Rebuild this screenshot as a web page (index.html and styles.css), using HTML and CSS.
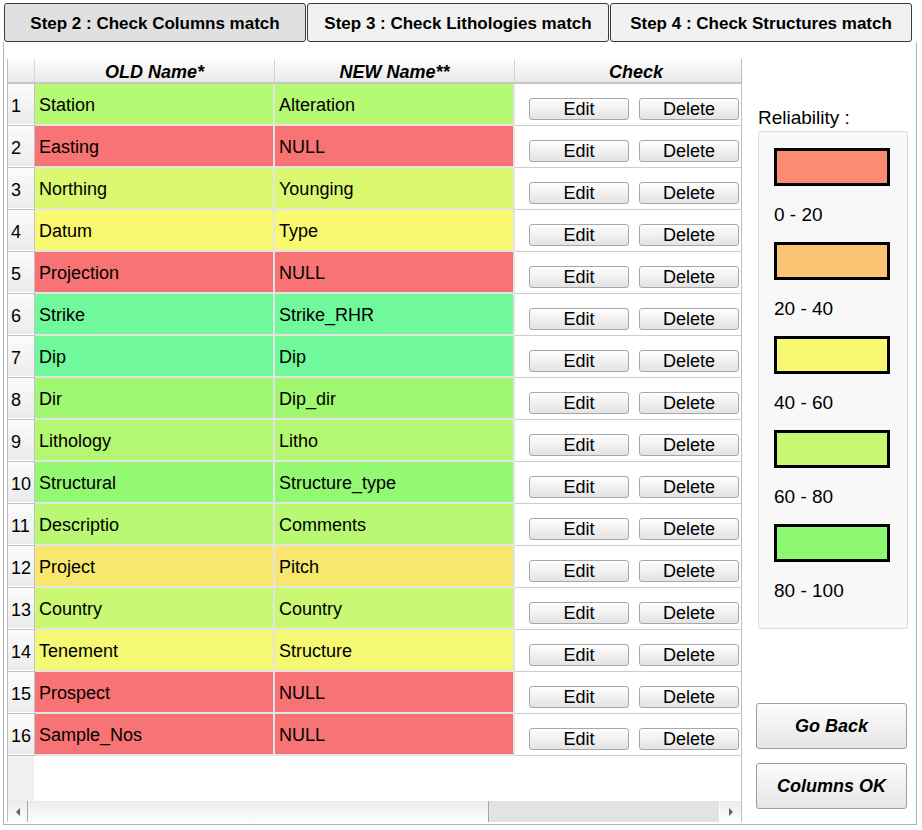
FILE: index.html
```html
<!DOCTYPE html>
<html>
<head>
<meta charset="utf-8">
<link rel="stylesheet" href="styles.css">
</head>
<body>
<div class="tabs">
  <div class="tab active">Step 2 : Check Columns match</div>
  <div class="tab">Step 3 : Check Lithologies match</div>
  <div class="tab">Step 4 : Check Structures match</div>
</div>
<div class="panel">
  <div class="grid">
    <div class="scroller">
      <div class="hrow">
        <div class="hrn"></div>
        <div class="hcell">OLD Name*</div>
        <div class="hcell">NEW Name**</div>
        <div class="hcell hcheck">Check</div>
      </div>
      <div class="row"><div class="rn">1</div><div class="cell c-lime">Station</div><div class="cell c-lime">Alteration</div><div class="check"><div class="btn">Edit</div><div class="btn">Delete</div></div></div>
      <div class="row"><div class="rn">2</div><div class="cell c-red">Easting</div><div class="cell c-red">NULL</div><div class="check"><div class="btn">Edit</div><div class="btn">Delete</div></div></div>
      <div class="row"><div class="rn">3</div><div class="cell c-yg">Northing</div><div class="cell c-yg">Younging</div><div class="check"><div class="btn">Edit</div><div class="btn">Delete</div></div></div>
      <div class="row"><div class="rn">4</div><div class="cell c-yel">Datum</div><div class="cell c-yel">Type</div><div class="check"><div class="btn">Edit</div><div class="btn">Delete</div></div></div>
      <div class="row"><div class="rn">5</div><div class="cell c-red">Projection</div><div class="cell c-red">NULL</div><div class="check"><div class="btn">Edit</div><div class="btn">Delete</div></div></div>
      <div class="row"><div class="rn">6</div><div class="cell c-mint">Strike</div><div class="cell c-mint">Strike_RHR</div><div class="check"><div class="btn">Edit</div><div class="btn">Delete</div></div></div>
      <div class="row"><div class="rn">7</div><div class="cell c-mint">Dip</div><div class="cell c-mint">Dip</div><div class="check"><div class="btn">Edit</div><div class="btn">Delete</div></div></div>
      <div class="row"><div class="rn">8</div><div class="cell c-green">Dir</div><div class="cell c-green">Dip_dir</div><div class="check"><div class="btn">Edit</div><div class="btn">Delete</div></div></div>
      <div class="row"><div class="rn">9</div><div class="cell c-lime2">Lithology</div><div class="cell c-lime2">Litho</div><div class="check"><div class="btn">Edit</div><div class="btn">Delete</div></div></div>
      <div class="row"><div class="rn">10</div><div class="cell c-green2">Structural</div><div class="cell c-green2">Structure_type</div><div class="check"><div class="btn">Edit</div><div class="btn">Delete</div></div></div>
      <div class="row"><div class="rn">11</div><div class="cell c-lime3">Descriptio</div><div class="cell c-lime3">Comments</div><div class="check"><div class="btn">Edit</div><div class="btn">Delete</div></div></div>
      <div class="row"><div class="rn">12</div><div class="cell c-orange">Project</div><div class="cell c-orange">Pitch</div><div class="check"><div class="btn">Edit</div><div class="btn">Delete</div></div></div>
      <div class="row"><div class="rn">13</div><div class="cell c-yg2">Country</div><div class="cell c-yg2">Country</div><div class="check"><div class="btn">Edit</div><div class="btn">Delete</div></div></div>
      <div class="row"><div class="rn">14</div><div class="cell c-yel2">Tenement</div><div class="cell c-yel2">Structure</div><div class="check"><div class="btn">Edit</div><div class="btn">Delete</div></div></div>
      <div class="row"><div class="rn">15</div><div class="cell c-red">Prospect</div><div class="cell c-red">NULL</div><div class="check"><div class="btn">Edit</div><div class="btn">Delete</div></div></div>
      <div class="row"><div class="rn">16</div><div class="cell c-red">Sample_Nos</div><div class="cell c-red">NULL</div><div class="check"><div class="btn">Edit</div><div class="btn">Delete</div></div></div>
      <div class="filler"><div class="frn"></div></div>
    </div>
    <div class="hscroll">
      <div class="arrow-box"><span class="tri-left"></span></div>
      <div class="thumb"></div>
      <div class="track"></div>
      <div class="arrow-box right"><span class="tri-right"></span></div>
    </div>
  </div>
  <div class="side">
    <div class="rel-title">Reliability :</div>
    <div class="legend">
      <div class="swatch s1"></div><div class="lbl">0 - 20</div>
      <div class="swatch s2"></div><div class="lbl">20 - 40</div>
      <div class="swatch s3"></div><div class="lbl">40 - 60</div>
      <div class="swatch s4"></div><div class="lbl">60 - 80</div>
      <div class="swatch s5"></div><div class="lbl">80 - 100</div>
    </div>
    <div class="actions">
      <div class="big-btn">Go Back</div>
      <div class="big-btn">Columns OK</div>
    </div>
  </div>
</div>
</body>
</html>
```
FILE: styles.css
```css
html, body {
  margin: 0;
  padding: 0;
  background: #ffffff;
  font-family: "Liberation Sans", Arial, sans-serif;
  color: #000;
}

.tabs {
  display: flex;
  gap: 1px;
  padding: 3px 0 0 4px;
  height: 39px;
  box-sizing: content-box;
}

.tab {
  box-sizing: border-box;
  width: 302px;
  height: 39px;
  border: 1px solid #3a3a3a;
  border-radius: 3px;
  background: #f1f1f1;
  font-weight: bold;
  font-size: 17px;
  padding-top: 2px;
  display: flex;
  align-items: center;
  justify-content: center;
}

.tab.active {
  background: #e0e0e0;
}

.panel {
  box-sizing: border-box;
  margin-left: 3px;
  width: 914px;
  height: 783px;
  border: 1px solid #b2b2b2;
  border-top: none;
  background: #fff;
  display: flex;
}

.grid {
  box-sizing: border-box;
  margin: 17px 0 2px 3px;
  width: 735px;
  border-left: 1px solid #bdbdbd;
  border-right: 1px solid #bdbdbd;
  display: flex;
  flex-direction: column;
  overflow: hidden;
}

.scroller {
  flex: 1;
  display: flex;
  flex-direction: column;
  width: 749px;
}

.hrow {
  display: flex;
  height: 23px;
  border-bottom: 2px solid #c6c6c6;
  background: linear-gradient(#fdfdfd, #e9e9e9);
}

.hrn {
  width: 27px;
  box-sizing: border-box;
  border-right: 1px solid #d6d6d6;
}

.hcell {
  box-sizing: border-box;
  width: 240px;
  border-right: 1px solid #d2d2d2;
  font-weight: bold;
  font-style: italic;
  font-size: 18px;
  line-height: 26px;
  text-align: center;
}

.hcell.hcheck {
  width: 242px;
  border-right: none;
}

.row {
  display: flex;
  height: 42px;
}

.rn {
  box-sizing: border-box;
  width: 27px;
  border-right: 1px solid #c3c3c3;
  border-bottom: 1px solid #c3c3c3;
  box-shadow: inset 0 -1px 0 #ffffff;
  background: linear-gradient(#fbfbfb, #ebebeb);
  font-size: 18px;
  padding: 4px 0 0 3px;
  display: flex;
  align-items: center;
}

.cell {
  box-sizing: border-box;
  width: 240px;
  border-right: 2px solid #e4e4e4;
  border-bottom: 2px solid #e4e4e4;
  padding: 2px 0 0 4px;
  font-size: 18px;
  display: flex;
  align-items: center;
}

.check {
  box-sizing: border-box;
  width: 242px;
  border-bottom: 1px solid #cdcdcd;
  padding: 14px 0 0 14px;
  display: flex;
  gap: 10px;
  align-items: flex-start;
}

.btn {
  box-sizing: border-box;
  width: 100px;
  height: 22px;
  border: 1px solid #a8a8a8;
  border-radius: 3px;
  background: linear-gradient(#fefefe, #e3e3e3);
  font-size: 18px;
  line-height: 21px;
  text-align: center;
}

.c-red { background: #f87373; }
.c-lime { background: #b6f972; }
.c-yg { background: #dcf870; }
.c-yel { background: #f8f871; }
.c-mint { background: #70f99a; }
.c-green { background: #a0f872; }
.c-lime2 { background: #b4f872; }
.c-green2 { background: #93f872; }
.c-lime3 { background: #b8f872; }
.c-orange { background: #f8e66e; }
.c-yg2 { background: #cbf872; }
.c-yel2 { background: #f4f872; }

.filler {
  flex: 1;
  display: flex;
}

.frn {
  width: 26px;
  background: #f0f0f0;
}

.hscroll {
  height: 21px;
  display: flex;
  flex-shrink: 0;
}

.arrow-box {
  box-sizing: border-box;
  width: 19px;
  background: linear-gradient(#ececec, #fdfdfd);
  display: flex;
  align-items: center;
  justify-content: center;
}

.arrow-box.right {
  width: 22px;
  border-left: 1px solid #ffffff;
}

.tri-left {
  width: 0;
  height: 0;
  border-top: 4px solid transparent;
  border-bottom: 4px solid transparent;
  border-right: 4px solid #606060;
}

.tri-right {
  width: 0;
  height: 0;
  border-top: 4px solid transparent;
  border-bottom: 4px solid transparent;
  border-left: 4px solid #606060;
}

.thumb {
  box-sizing: border-box;
  width: 462px;
  border-left: 1px solid #a6a6a6;
  border-right: 1px solid #a6a6a6;
  background: linear-gradient(#ececec, #fdfdfd);
}

.track {
  flex: 1;
  background: #e3e3e3;
}

.side {
  flex: 1;
  display: flex;
  flex-direction: column;
  padding: 65px 0 15px 0;
}

.rel-title {
  margin-left: 16px;
  font-size: 19px;
  line-height: 22px;
  margin-bottom: 2px;
}

.legend {
  box-sizing: border-box;
  margin-left: 16px;
  width: 150px;
  border: 1px solid #dcdcdc;
  border-radius: 2px;
  background: #f8f8f8;
  padding: 16px 0 26px 15px;
}

.swatch {
  box-sizing: border-box;
  width: 116px;
  height: 38px;
  border: 3px solid #000;
}

.s1 { background: #fc8b73; }
.s2 { background: #f9c474; }
.s3 { background: #f9f872; }
.s4 { background: #c8f872; }
.s5 { background: #8cf872; }

.lbl {
  font-size: 19px;
  line-height: 22px;
  margin: 18px 0 16px 0;
}

.lbl:last-child {
  margin-bottom: 0;
}

.actions {
  margin-top: auto;
  margin-left: 14px;
  display: flex;
  flex-direction: column;
  gap: 14px;
}

.big-btn {
  box-sizing: border-box;
  width: 151px;
  height: 46px;
  border: 1px solid #9c9c9c;
  border-radius: 3px;
  background: linear-gradient(#fcfcfc, #e6e6e6);
  font-weight: bold;
  font-style: italic;
  font-size: 18px;
  display: flex;
  align-items: center;
  justify-content: center;
}
```
